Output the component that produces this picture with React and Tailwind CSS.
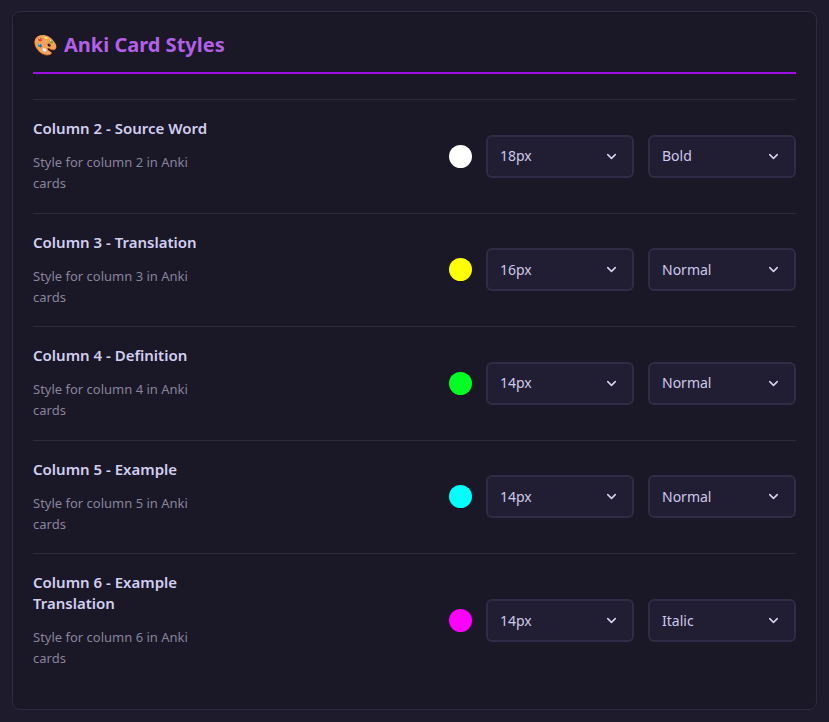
import { ChevronDown } from 'lucide-react';

const rows = [
  { col: 2, name: 'Source Word', color: '#ffffff', size: '18px', weight: 'Bold' },
  { col: 3, name: 'Translation', color: '#ffff00', size: '16px', weight: 'Normal' },
  { col: 4, name: 'Definition', color: '#00ff22', size: '14px', weight: 'Normal' },
  { col: 5, name: 'Example', color: '#00ffff', size: '14px', weight: 'Normal' },
  { col: 6, name: 'Example Translation', color: '#ff00ff', size: '14px', weight: 'Italic' },
];

function FakeSelect({ value }) {
  return (
    <div className="w-[148px] h-[43px] rounded-md border-2 border-[#302c45] bg-[#211d33] pl-3 pr-[13px] flex items-center justify-between text-sm text-[#cdc9ea]">
      <span>{value}</span>
      <ChevronDown size={15} strokeWidth={2.5} className="text-[#d6d3f0]" />
    </div>
  );
}

function StyleRow({ row }) {
  return (
    <div className="border-t border-[#2d2a3d] pt-[18px] pb-[18.5px] flex items-center justify-between">
      <div className="w-[180px]">
        <div className="text-[15px] font-semibold leading-[21px] text-[#d2cff1]">
          Column {row.col} - {row.name}
        </div>
        <div className="mt-[13px] text-[13px] leading-[21px] text-[#88849c]">
          Style for column {row.col} in Anki cards
        </div>
      </div>
      <div className="flex items-center gap-[14px]">
        <div className="w-[23px] h-[23px] rounded-full" style={{ backgroundColor: row.color }} />
        <FakeSelect value={row.size} />
        <FakeSelect value={row.weight} />
      </div>
    </div>
  );
}

export default function App() {
  return (
    <div
      className="min-h-screen bg-[#1e1b2d] px-3 pt-[11px] pb-3"
      style={{ fontFamily: '"Noto Sans", "Open Sans", sans-serif' }}
    >
      <div className="rounded-lg border border-[#2e2a3f] bg-[#1a1726] px-5 pt-[17px] pb-[21px]">
        <div className="border-b-2 border-[#9b10e2] pb-[11px] mb-[25px]">
          <h2 className="text-xl font-bold leading-[32px] text-[#b360e6] flex items-center gap-1.5">
            <span>🎨</span>
            <span>Anki Card Styles</span>
          </h2>
        </div>
        {rows.map((r) => (
          <StyleRow key={r.col} row={r} />
        ))}
      </div>
    </div>
  );
}
